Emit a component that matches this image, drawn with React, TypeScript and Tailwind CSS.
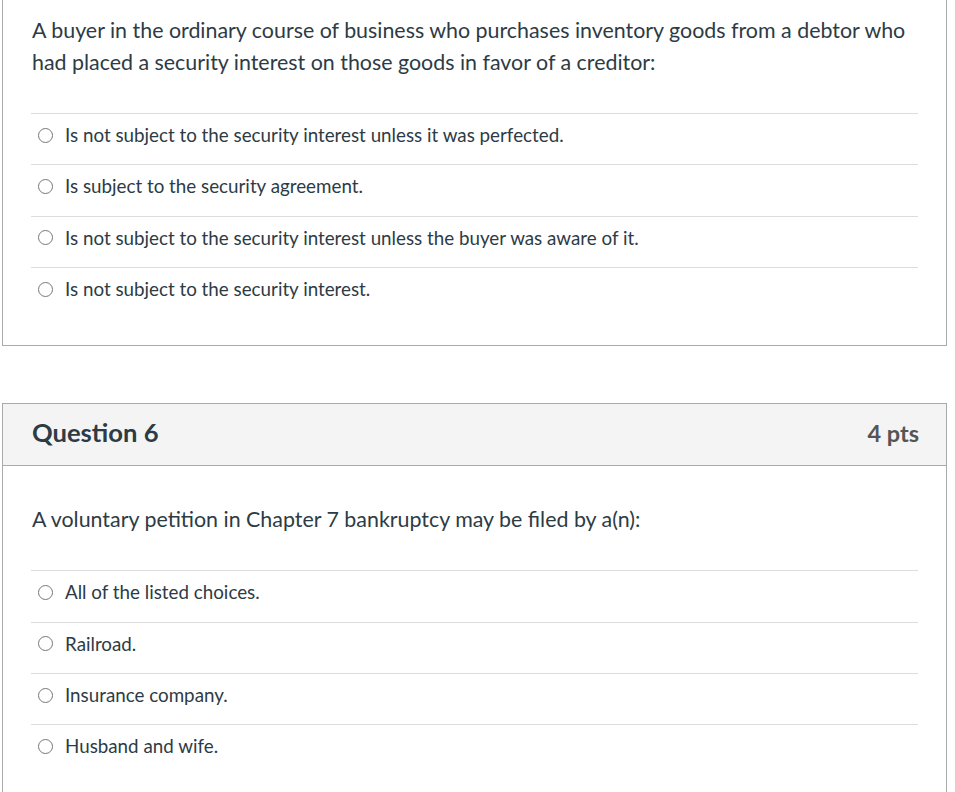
const font = { fontFamily: "Lato, 'Open Sans', sans-serif" };

type Q = { text: string; answers: string[] };

const q5: Q = {
  text: "A buyer in the ordinary course of business who purchases inventory goods from a debtor who had placed a security interest on those goods in favor of a creditor:",
  answers: [
    "Is not subject to the security interest unless it was perfected.",
    "Is subject to the security agreement.",
    "Is not subject to the security interest unless the buyer was aware of it.",
    "Is not subject to the security interest.",
  ],
};

const q6: Q = {
  text: "A voluntary petition in Chapter 7 bankruptcy may be filed by a(n):",
  answers: ["All of the listed choices.", "Railroad.", "Insurance company.", "Husband and wife."],
};

function Radio() {
  return <span className="block w-[15px] h-[15px] shrink-0 rounded-full border-[1.5px] border-[#777777] bg-white" />;
}

function Answers({ answers }: { answers: string[] }) {
  return (
    <div className="ml-[28px] mr-[28px]">
      {answers.map((a) => (
        <div key={a} className="flex items-center h-[51.33px] pb-[8px] border-t border-[#dddddd]">
          <div className="ml-[7px]">
            <Radio />
          </div>
          <span className="ml-[12px] text-[18.8px] leading-[24px] text-[#2d3b45]">{a}</span>
        </div>
      ))}
    </div>
  );
}

export default function App() {
  return (
    <div className="bg-white min-h-[792px] pl-[2px] pr-[8px]" style={font}>
      <div className="border-x border-b border-[#aaaaaa] pt-[14px] pb-[27px]">
        <p className="px-[29px] text-[21.4px] leading-[32px] text-[#2d3b45]">{q5.text}</p>
        <div className="h-[35px]" />
        <Answers answers={q5.answers} />
      </div>

      <div className="mt-[57px] border border-[#aaaaaa]">
        <div className="flex items-center justify-between h-[62px] pb-[5px] bg-[#f4f4f4] border-b border-[#aaaaaa] pl-[29px] pr-[27px]">
          <h2 className="text-[25.6px] font-bold text-[#2d3b45]">Question 6</h2>
          <span className="pt-[3px] text-[23.5px] font-bold text-[#555555]">4 pts</span>
        </div>
        <div className="pt-[37px] pb-[40px]">
          <p className="px-[29px] text-[21.4px] leading-[32px] text-[#2d3b45]">{q6.text}</p>
          <div className="h-[35px]" />
          <Answers answers={q6.answers} />
        </div>
      </div>
    </div>
  );
}
